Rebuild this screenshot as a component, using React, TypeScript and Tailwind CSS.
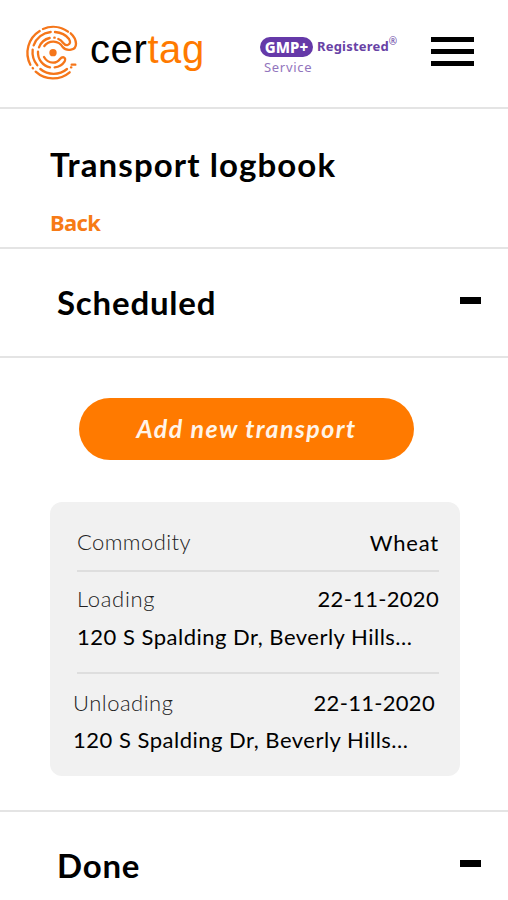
import type { ReactNode } from 'react';

function LogoMark() {
  return (
    <svg viewBox="0 0 225 225" className="h-[75px] w-[75px] shrink-0" fill="none" stroke="#f5761a" strokeWidth="7" strokeLinecap="round">
      <circle cx="114" cy="113" r="11" fill="#f5761a" stroke="none" />
      {/* outer ring */}
      <path d="M84 42A77 77 0 0 1 159 50M167 55Q182 68 183 86Q183 101 168 104Q152 107 143 96A33 33 0 0 0 88 93" />
      <path d="M74 48A77 77 0 0 0 46 149M53 159L54 160M62 170A77 77 0 0 0 164 172" />
      {/* second ring */}
      <path d="M120 51Q148 53 162 72Q170 86 158 90Q151 92 144 83Q138 75 130 72" />
      <path d="M107 51A62 62 0 0 0 56 91M53 104A62 62 0 0 0 67 151M76 162A62 62 0 0 0 156 162M168 157L169 157M170 149L181 149" />
      {/* third ring */}
      <path d="M118 68L119 68M104 69A45 45 0 0 0 72 97M69 110A45 45 0 0 0 105 157M119 157Q139 155 149 139Q153 130 146 127Q140 126 135 132Q127 143 114 143Q96 142 87 126" />
    </svg>
  );
}

function Divider() {
  return <div className="h-[2px] bg-[#e4e4e4]" />;
}

function Section({ title, children }: { title: string; children?: ReactNode }) {
  return (
    <section>
      <div className="flex h-[107px] items-center justify-between pr-[27px] pl-[57px]">
        <h2 className="mb-px text-[33px] leading-10 font-bold tracking-[0.8px]">{title}</h2>
        <span className="mb-1 h-[7px] w-[21px] bg-black" />
      </div>
      {children}
    </section>
  );
}

export default function App() {
  return (
    <div className="h-[900px] w-[508px] overflow-hidden bg-white font-['Lato',sans-serif] text-black">
      {/* Header */}
      <header className="flex h-[107px] items-start pt-[15px] pl-[15px]">
        <LogoMark />
        <div className="mt-[9px] w-[170px] font-['Liberation_Sans',sans-serif] text-[40px] leading-[50px] tracking-[0.6px]">
          cer<span className="text-[#ff7a00]">tag</span>
        </div>
        <div className="mt-[22px] w-[171px] font-['Noto_Sans',sans-serif] text-[#6842a5]">
          <div className="flex h-5 items-center">
            <span className="flex h-5 w-[53px] items-center justify-center rounded-full bg-[#6539a8] text-[15px] font-extrabold text-white">GMP+</span>
            <span className="ml-1 text-[13px] font-bold tracking-[0.2px]">Registered</span>
            <span className="mb-3 text-[10px]">®</span>
          </div>
          <div className="ml-1 text-[13px] leading-5 tracking-[0.7px] text-[#9275bd]">Service</div>
        </div>
        <div className="mt-[22px] flex w-[43px] flex-col gap-[7px]">
          <span className="h-[5px] bg-black" />
          <span className="h-[5px] bg-black" />
          <span className="h-[5px] bg-black" />
        </div>
      </header>
      <Divider />

      {/* Page title */}
      <div className="flex h-[138px] flex-col items-start pt-[35px] pl-[50px]">
        <h1 className="text-[33px] leading-10 font-bold tracking-[1.1px]">Transport logbook</h1>
        <a href="#" className="mt-[22px] font-['Noto_Sans',sans-serif] text-[22px] leading-8 font-bold tracking-[-0.6px] text-[#f77b16]">
          Back
        </a>
      </div>
      <Divider />

      <Section title="Scheduled">
        <Divider />
        <div className="h-[452px] pt-[40px]">
          <button className="ml-[79px] block h-[62px] w-[335px] rounded-full bg-[#ff7a00] text-[25px] font-bold tracking-[1.4px] text-[#fff4e8] italic">
            Add new transport
          </button>

          {/* Transport card */}
          <div className="mt-[42px] ml-[50px] h-[274px] w-[410px] rounded-xl bg-[#f1f1f1] pt-[25px] pr-[21px] pl-[27px] text-[22px] leading-8">
            <div className="flex justify-between">
              <span className="-mt-px mb-px font-light tracking-[0.4px] text-[#222]">Commodity</span>
              <span className="tracking-[0.8px]">Wheat</span>
            </div>
            <div className="mt-[11px] h-[2px] bg-[#dedede]" />
            <div className="mt-[11px] flex justify-between">
              <span className="font-light tracking-[0.7px] text-[#222]">Loading</span>
              <span className="tracking-[0.3px]">22-11-2020</span>
            </div>
            <div className="mt-[6px] whitespace-nowrap tracking-[0.5px]">120 S Spalding Dr, Beverly Hills...</div>
            <div className="mt-[19px] h-[2px] bg-[#dedede]" />
            <div className="mt-[13px] -ml-1 mr-1">
              <div className="flex justify-between">
                <span className="font-light tracking-[0.5px] text-[#222]">Unloading</span>
                <span className="tracking-[0.3px]">22-11-2020</span>
              </div>
              <div className="mt-[5px] whitespace-nowrap tracking-[0.5px]">120 S Spalding Dr, Beverly Hills...</div>
            </div>
          </div>
        </div>
      </Section>
      <Divider />
      <Section title="Done" />
    </div>
  );
}
